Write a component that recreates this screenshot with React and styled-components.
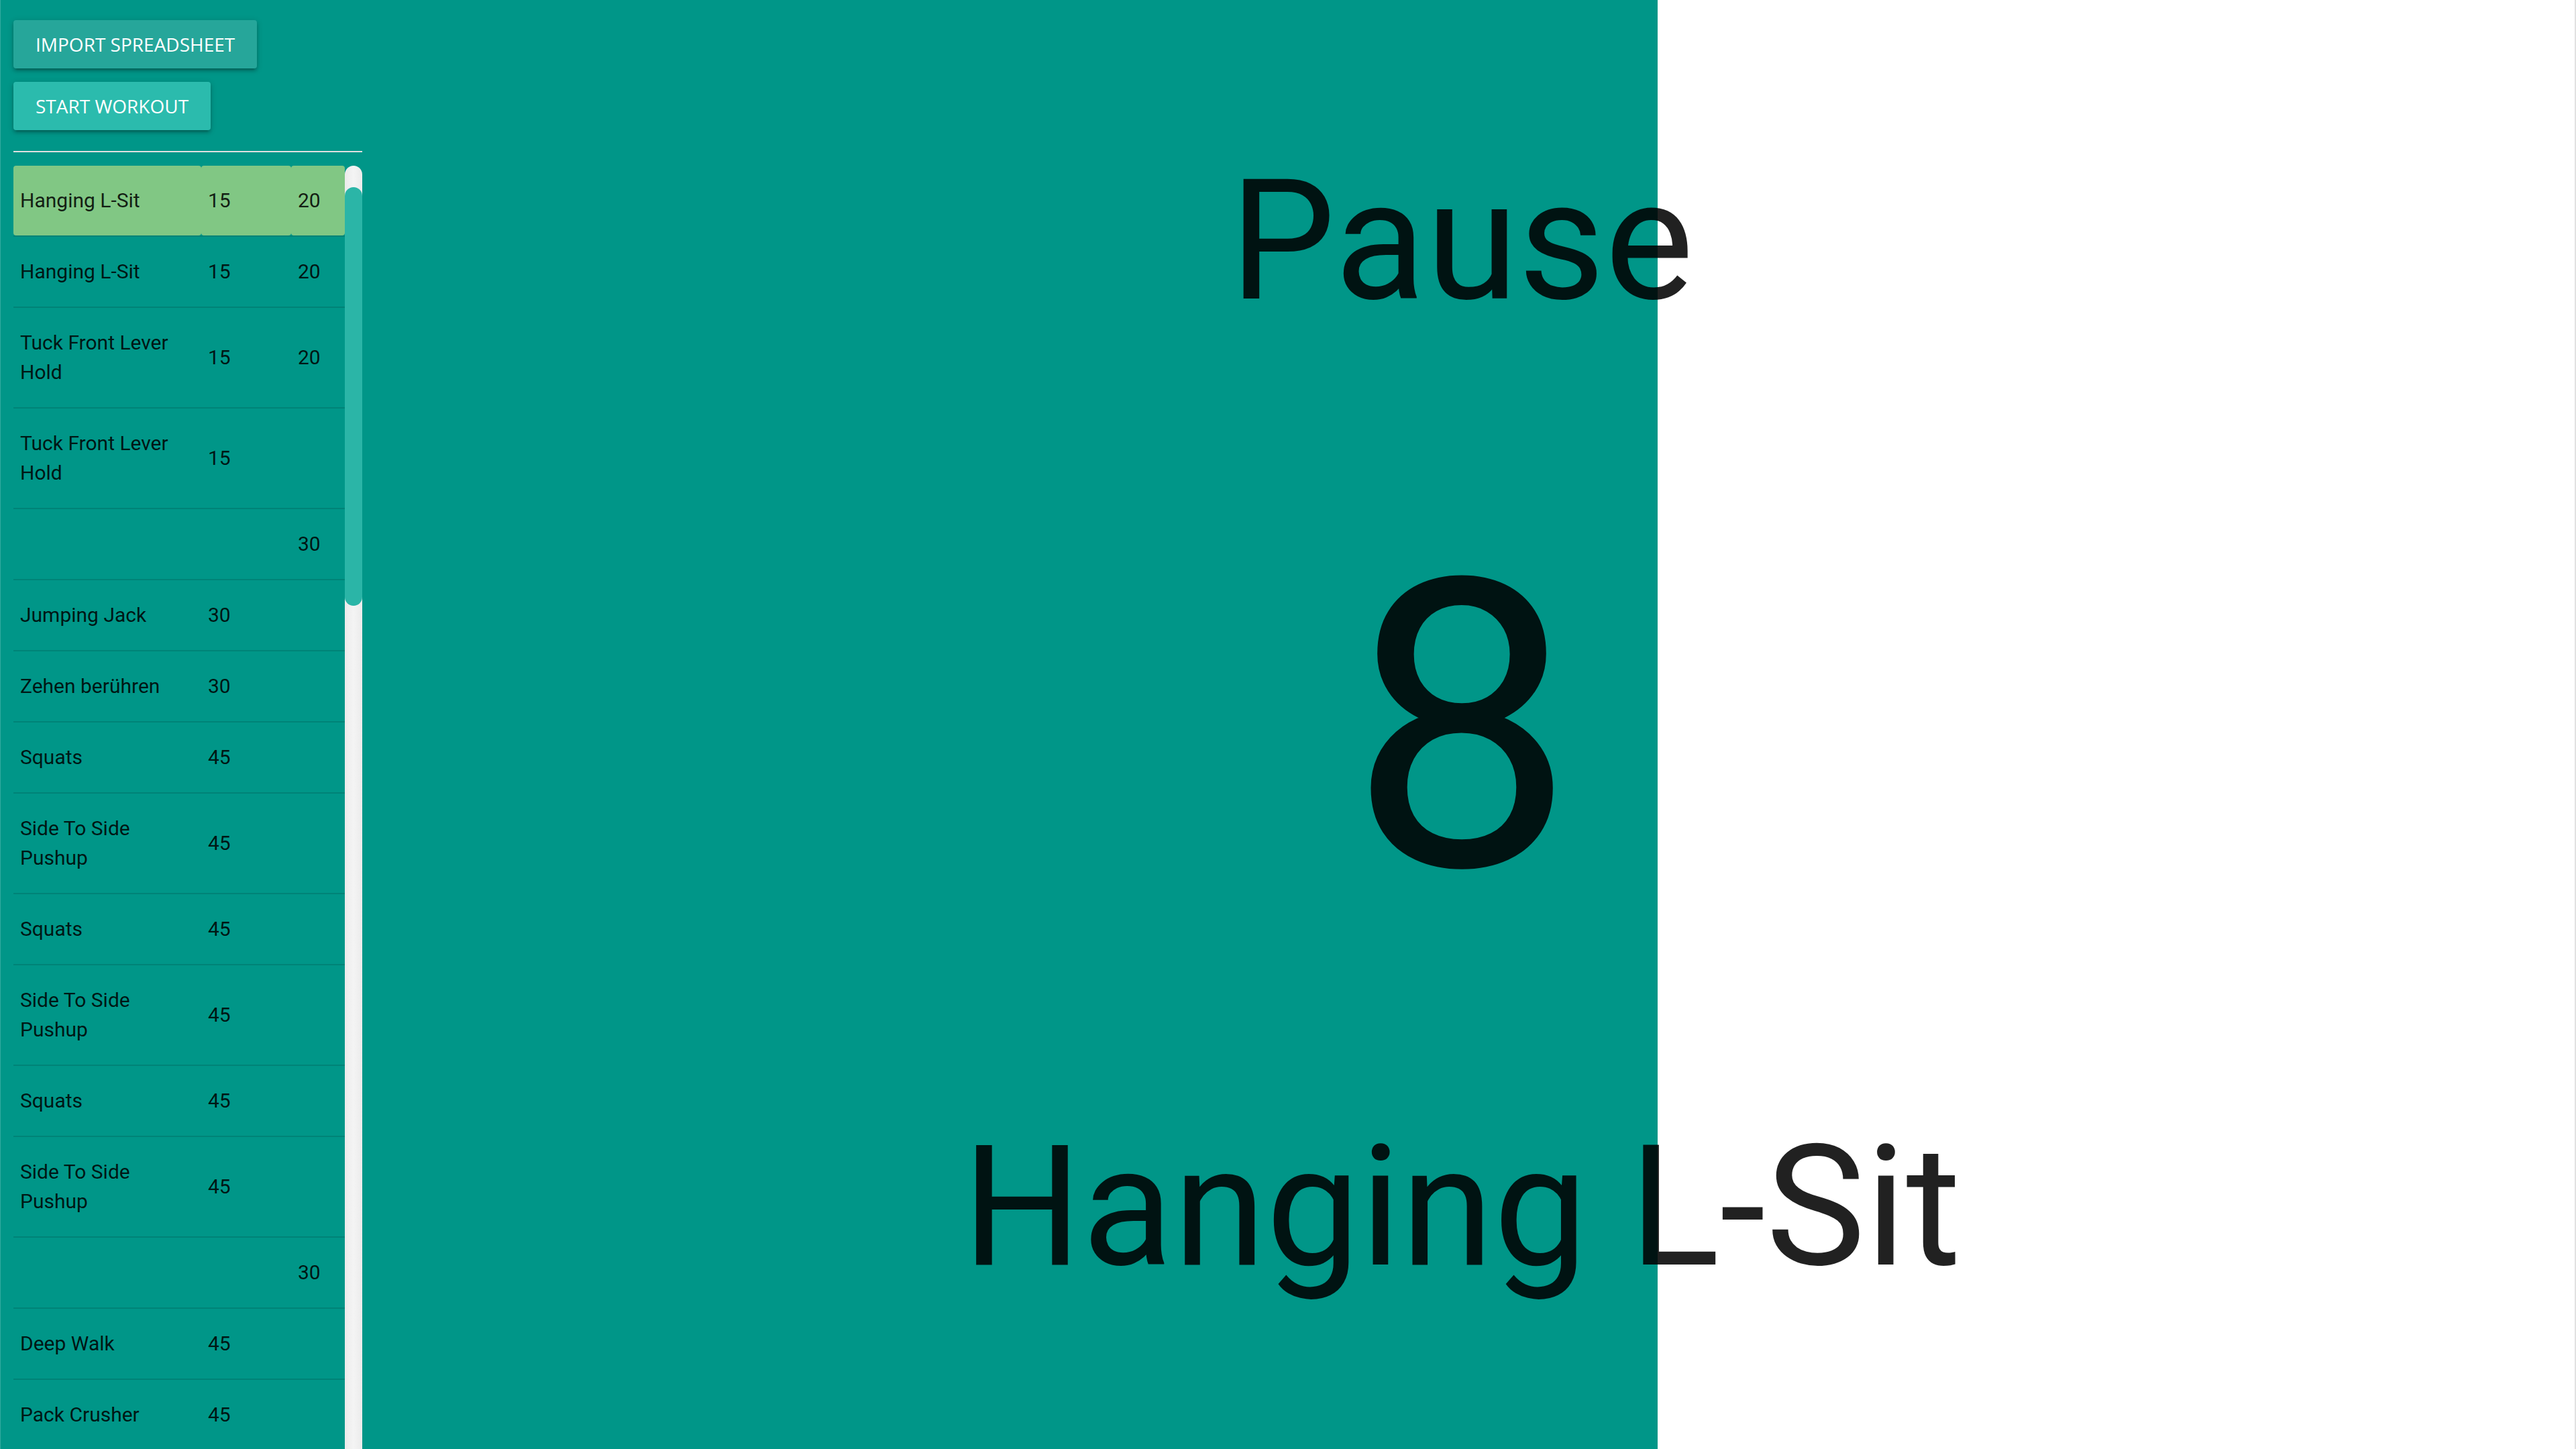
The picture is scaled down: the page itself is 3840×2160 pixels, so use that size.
import React from "react";
import styled, { createGlobalStyle } from "styled-components";

const exercises = [
  { name: "Hanging L-Sit", reps: "15", rest: "20", active: true },
  { name: "Hanging L-Sit", reps: "15", rest: "20" },
  { name: "Tuck Front Lever Hold", reps: "15", rest: "20" },
  { name: "Tuck Front Lever Hold", reps: "15", rest: "" },
  { name: "", reps: "", rest: "30" },
  { name: "Jumping Jack", reps: "30", rest: "" },
  { name: "Zehen berühren", reps: "30", rest: "" },
  { name: "Squats", reps: "45", rest: "" },
  { name: "Side To Side Pushup", reps: "45", rest: "" },
  { name: "Squats", reps: "45", rest: "" },
  { name: "Side To Side Pushup", reps: "45", rest: "" },
  { name: "Squats", reps: "45", rest: "" },
  { name: "Side To Side Pushup", reps: "45", rest: "" },
  { name: "", reps: "", rest: "30" },
  { name: "Deep Walk", reps: "45", rest: "" },
  { name: "Pack Crusher", reps: "45", rest: "" },
];

const App = () => {
  return (
    <>
      <GlobalStyle />
      <Page>
        <Sidebar>
          <ButtonStack>
            <ActionButton $tone="dark">Import Spreadsheet</ActionButton>
            <ActionButton $tone="light">Start Workout</ActionButton>
          </ButtonStack>
          <Divider />
          <ListArea>
            <Table>
              {exercises.map((ex, i) => (
                <Row key={i}>
                  <Cell $active={ex.active}>{ex.name}</Cell>
                  <Cell $active={ex.active}>{ex.reps}</Cell>
                  <Cell $active={ex.active}>{ex.rest}</Cell>
                </Row>
              ))}
            </Table>
            <ScrollTrack>
              <ScrollThumb />
            </ScrollTrack>
          </ListArea>
        </Sidebar>
        <Stage>
          <Label>Pause</Label>
          <Countdown>8</Countdown>
          <Label $gap={290}>Hanging L-Sit</Label>
        </Stage>
      </Page>
    </>
  );
};

export default App;

const GlobalStyle = createGlobalStyle`
  html, body {
    margin: 0;
    padding: 0;
    background: #ffffff;
  }
  body {
    font-family: Roboto, "Liberation Sans", sans-serif;
  }
  * {
    box-sizing: border-box;
  }
`;

const Page = styled.div`
  display: grid;
  grid-template-columns: 539px 1fr;
  height: 100vh;
  overflow: hidden;
  background: linear-gradient(90deg, #009688 2470px, #ffffff 2470px);
  border-left: 1px solid #33aba0;
  border-right: 2px solid #e2e2e2;
`;

const Sidebar = styled.aside`
  display: flex;
  flex-direction: column;
  padding: 30px 0 0 19px;
  min-height: 0;
  overflow: hidden;
`;

const ButtonStack = styled.div`
  display: flex;
  flex-direction: column;
  align-items: flex-start;
  gap: 20px;
`;

const ActionButton = styled.button`
  height: 72px;
  padding: 0 33px;
  border: none;
  border-radius: 4px;
  background: ${(p) => (p.$tone === "dark" ? "#26a69a" : "#2bbbad")};
  color: #ffffff;
  font-family: "Open Sans", "Noto Sans", sans-serif;
  font-size: 28px;
  line-height: 72px;
  text-transform: uppercase;
  cursor: pointer;
  box-shadow: 0 4px 4px 0 rgba(0, 0, 0, 0.14), 0 6px 2px -4px rgba(0, 0, 0, 0.12),
    0 2px 10px 0 rgba(0, 0, 0, 0.2);
`;

const Divider = styled.hr`
  width: 100%;
  margin: 31px 0 20px;
  border: none;
  border-top: 2px solid #e0e0e0;
`;

const ListArea = styled.div`
  display: flex;
  flex: 1;
  min-height: 0;
`;

const Table = styled.div`
  width: 494px;
  display: flex;
  flex-direction: column;
`;

const Row = styled.div`
  display: grid;
  grid-template-columns: 280px 134px 80px;
  border-bottom: 2px solid rgba(0, 0, 0, 0.12);
  flex-shrink: 0;
`;

const Cell = styled.div`
  display: flex;
  align-items: center;
  padding: 30px 10px;
  font-family: Roboto, "Liberation Sans", sans-serif;
  font-size: 30px;
  line-height: 44px;
  color: rgba(0, 0, 0, 0.87);
  border-radius: 4px;
  background: ${(p) => (p.$active ? "#81c784" : "transparent")};
`;

const ScrollTrack = styled.div`
  width: 26px;
  flex-shrink: 0;
  display: flex;
  flex-direction: column;
  background: linear-gradient(90deg, #ebebeb, #f4f4f4 50%, #ebebeb);
  border-radius: 13px 13px 0 0;
`;

const ScrollThumb = styled.div`
  margin-top: 32px;
  height: 624px;
  border-radius: 13px;
  background: #2bb5a7;
`;

const Stage = styled.main`
  display: flex;
  flex-direction: column;
  align-items: center;
  padding: 235px 20px 0 0;
  color: rgba(0, 0, 0, 0.87);
  font-family: Roboto, "Liberation Sans", sans-serif;
`;

const Label = styled.h1`
  margin: ${(p) => p.$gap || 0}px 0 0;
  font-size: 250px;
  font-weight: 400;
  line-height: 1;
  white-space: nowrap;
`;

const Countdown = styled.div`
  margin-top: 300px;
  font-size: 600px;
  font-weight: 400;
  line-height: 1;
`;
